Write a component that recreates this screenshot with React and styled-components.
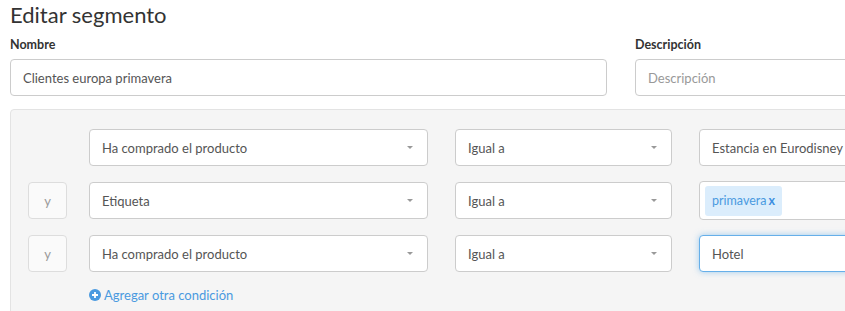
import React from 'react';
import styled, {createGlobalStyle} from 'styled-components';

const GlobalStyle = createGlobalStyle`
  body {
    margin: 0;
    background: #fff;
    font-family: Lato, "Noto Sans", sans-serif;
    color: #333;
    overflow: hidden;
  }
`;

const Page = styled.div`
  width: 845px;
  height: 311px;
  overflow: hidden;
  padding: 0 0 0 10px;
  box-sizing: border-box;
`;

const Title = styled.h1`
  margin: 0;
  padding-top: 1px;
  font-size: 22px;
  font-weight: 400;
  line-height: 28px;
  color: #333;
`;

const FieldRow = styled.div`
  display: flex;
  gap: 28px;
  margin-top: 8px;
  width: 900px;
`;

const Field = styled.div`
  display: flex;
  flex-direction: column;
  width: ${({width}) => width}px;
`;

const Label = styled.label`
  font-size: 12.5px;
  font-weight: 700;
  line-height: 16px;
  margin-bottom: 6px;
  color: #333;
`;

const Input = styled.div`
  box-sizing: border-box;
  height: ${({tall}) => (tall ? 39 : 37)}px;
  padding: 0 12px;
  display: flex;
  align-items: center;
  background: #fff;
  border: 1px solid ${({focused}) => (focused ? '#66afe9' : '#ccc')};
  border-radius: 4px;
  font-size: 13px;
  color: ${({placeholder}) => (placeholder ? '#999' : '#555')};
  box-shadow: ${({focused}) =>
    focused ? '0 0 6px rgba(102,175,233,.6)' : 'none'};
  white-space: nowrap;
  overflow: hidden;
  width: ${({width}) => (width ? `${width}px` : 'auto')};
`;

const Panel = styled.div`
  margin-top: 13px;
  width: 900px;
  height: 220px;
  background: #f5f5f5;
  border: 1px solid #e3e3e3;
  border-radius: 4px;
  padding: 19px 0 0 17px;
  box-sizing: border-box;
  display: flex;
  flex-direction: column;
  gap: 15px;
`;

const Row = styled.div`
  display: flex;
  align-items: center;
  gap: 22px;
`;

const Connector = styled.div`
  box-sizing: border-box;
  width: 39px;
  height: 37px;
  display: flex;
  align-items: center;
  justify-content: center;
  border: 1px solid ${({hidden}) => (hidden ? 'transparent' : '#ddd')};
  border-radius: 4px;
  background: ${({hidden}) => (hidden ? 'transparent' : '#fafafa')};
  color: #999;
  font-size: 13px;
  visibility: ${({hidden}) => (hidden ? 'hidden' : 'visible')};
`;

const Fields = styled.div`
  display: flex;
  align-items: center;
  gap: 27px;
`;

const Select = styled(Input)`
  justify-content: space-between;
  color: #555;
`;

const Caret = styled.span`
  width: 0;
  height: 0;
  border-left: 3px solid transparent;
  border-right: 3px solid transparent;
  border-top: 3px solid #999;
  margin-right: 2px;
`;

const TagInput = styled(Input)`
  padding: 0 5px;
`;

const Tag = styled.span`
  display: inline-flex;
  align-items: center;
  height: 30px;
  padding: 0 7px;
  background: #dbedfc;
  border-radius: 3px;
  color: #4a9ae0;
  font-size: 12.5px;
`;

const TagX = styled.span`
  margin-left: 2px;
  font-weight: 700;
  color: #3d8fe0;
`;

const AddLink = styled.a`
  display: inline-flex;
  align-items: center;
  align-self: flex-start;
  gap: 3px;
  margin: 0 0 0 61px;
  color: #4a9ae0;
  font-size: 13px;
  line-height: 16px;
  text-decoration: none;
`;

const PlusIcon = () => (
  <svg width="12" height="12" viewBox="0 0 12 12">
    <circle cx="6" cy="6" r="6" fill="#4a9ae0" />
    <path d="M6 3v6M3 6h6" stroke="#fff" strokeWidth="1.8" />
  </svg>
);

const conditions = [
  {join: null, field: 'Ha comprado el producto', op: 'Igual a', value: 'Estancia en Eurodisney'},
  {join: 'y', field: 'Etiqueta', op: 'Igual a', tag: 'primavera'},
  {join: 'y', field: 'Ha comprado el producto', op: 'Igual a', value: 'Hotel', focused: true},
];

const App = () => (
  <Page>
    <GlobalStyle />
    <Title>Editar segmento</Title>
    <FieldRow>
      <Field width={597}>
        <Label>Nombre</Label>
        <Input>Clientes europa primavera</Input>
      </Field>
      <Field width={240}>
        <Label>Descripción</Label>
        <Input placeholder>Descripción</Input>
      </Field>
    </FieldRow>
    <Panel>
      {conditions.map((c, i) => (
        <Row key={i}>
          <Connector hidden={!c.join}>{c.join}</Connector>
          <Fields>
            <Select width={339}>
              {c.field}
              <Caret />
            </Select>
            <Select width={217}>
              {c.op}
              <Caret />
            </Select>
            {c.tag ? (
              <TagInput width={180} tall>
                <Tag>
                  {c.tag}
                  <TagX>x</TagX>
                </Tag>
              </TagInput>
            ) : (
              <Input width={180} focused={c.focused}>
                {c.value}
              </Input>
            )}
          </Fields>
        </Row>
      ))}
      <AddLink href="#">
        <PlusIcon />
        Agregar otra condición
      </AddLink>
    </Panel>
  </Page>
);

export default App;
